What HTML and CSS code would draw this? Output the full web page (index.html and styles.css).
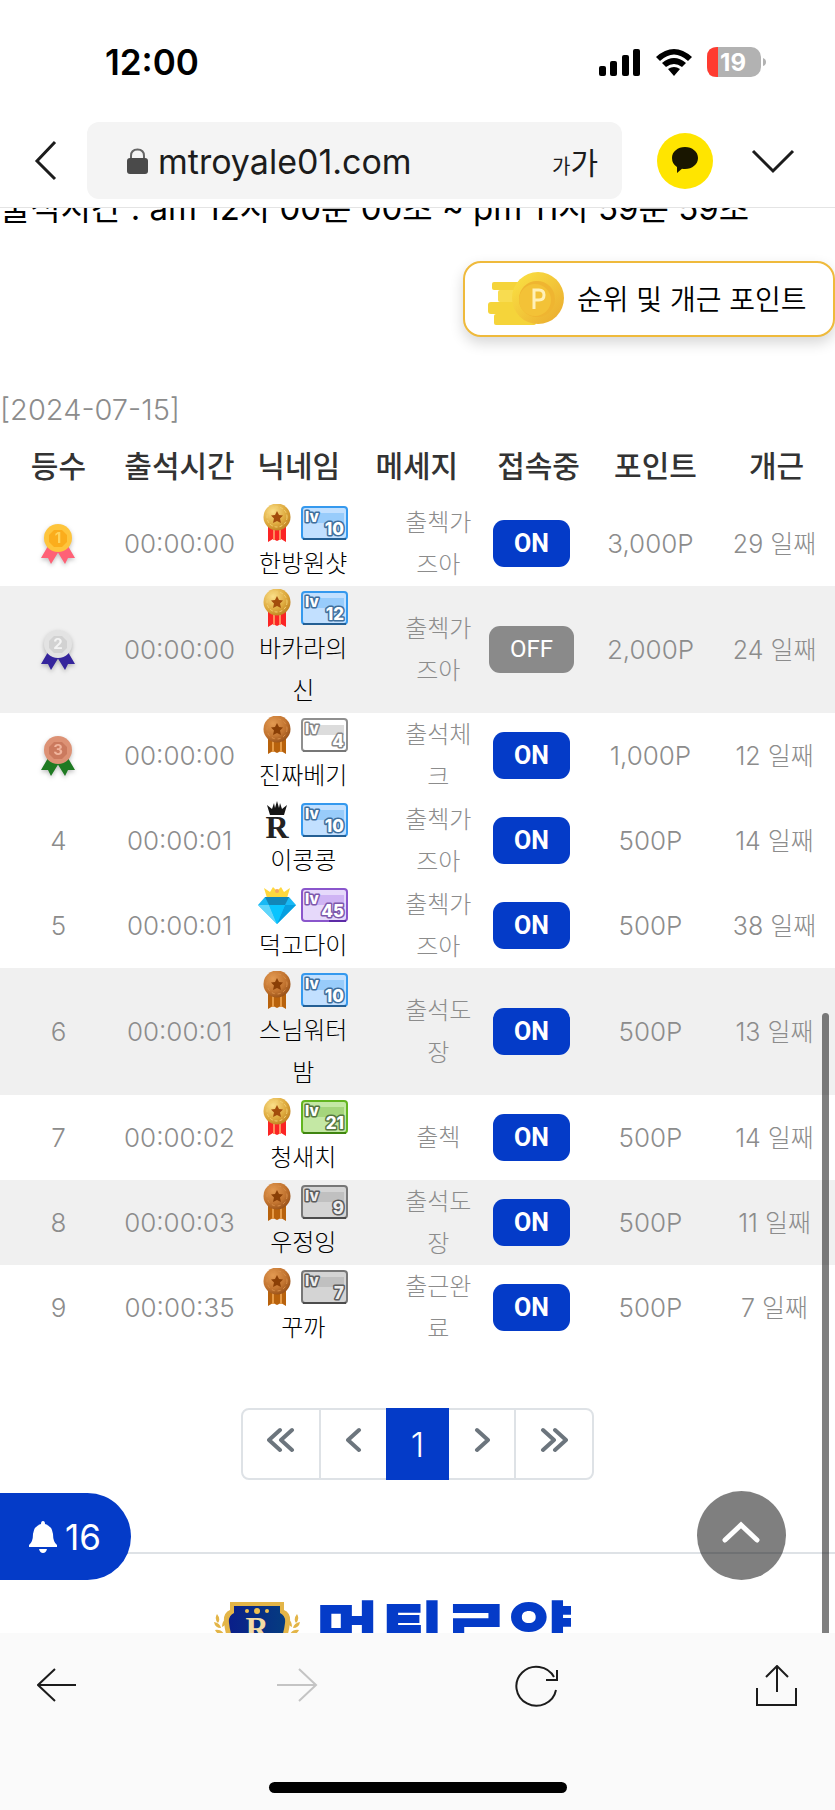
FILE: index.html
```html
<!DOCTYPE html>
<html lang="ko">
<head>
<meta charset="utf-8">
<meta name="viewport" content="width=device-width, initial-scale=1">
<title>mtroyale01.com</title>
<link rel="stylesheet" href="styles.css">
</head>
<body>
<svg class="defs" aria-hidden="true">
  <defs>
    <linearGradient id="coin" x1="0" y1="0" x2="1" y2="1"><stop offset="0" stop-color="#fbe444"/><stop offset="1" stop-color="#eaa92e"/></linearGradient>
    <radialGradient id="gold" cx=".35" cy=".3" r=".8"><stop offset="0" stop-color="#fbe08a"/><stop offset=".6" stop-color="#deaa3e"/><stop offset="1" stop-color="#b97a1c"/></radialGradient>
    <radialGradient id="bronze" cx=".35" cy=".3" r=".8"><stop offset="0" stop-color="#e39a52"/><stop offset=".6" stop-color="#c27430"/><stop offset="1" stop-color="#8f4a14"/></radialGradient>
    <linearGradient id="navy" x1="0" y1="0" x2="1" y2="0"><stop offset="0" stop-color="#0a1f8a"/><stop offset="1" stop-color="#053c80"/></linearGradient>
    <symbol id="medal-gold" viewBox="0 0 38 38">
      <path d="M10 23h18v15l-5-3-4 2-4-2-5 3z" fill="#fb2424"/><path d="M15 24h2v12h-2zm6 0h2v12h-2z" fill="#ff8a5a"/>
      <circle cx="19" cy="13" r="13.500" fill="url(#gold)"/><circle cx="19" cy="13" r="10" fill="none" stroke="#f3d171" stroke-dasharray="3 2"/>
      <path d="M19 7l2 4 4 .5-3 3 1 4.500-4-2-4 2 1-4.500-3-3 4-.5z" fill="#a34d0c"/>
    </symbol>
    <symbol id="medal-bronze" viewBox="0 0 38 38">
      <path d="M10 23h18v15l-5-3-4 2-4-2-5 3z" fill="#b8620c"/><path d="M14 24h2v12h-2zm8 0h2v12h-2z" fill="#e69a45"/>
      <circle cx="19" cy="13" r="13.500" fill="url(#bronze)"/><circle cx="19" cy="13" r="10" fill="none" stroke="#d98f4a" stroke-dasharray="3 3"/>
      <path d="M19 7l2 4 4 .5-3 3 1 4.500-4-2-4 2 1-4.500-3-3 4-.5z" fill="#8a3f06"/>
    </symbol>
    <symbol id="crown-r" viewBox="0 0 38 38">
      <path d="M12 14L9 4l5 4 2-6 1 5 2-7 2 7 1-5 2 6 5-4-3 10z" fill="#151515"/>
      <text class="crown-letter" x="19" y="37" text-anchor="middle">R</text>
    </symbol>
    <symbol id="diamond" viewBox="0 0 38 38">
      <path d="M9 12L6 2l6 4 3-5 4 4 4-4 3 5 6-4-3 10z" fill="#ffd83d"/><circle cx="19" cy="5" r="2" fill="#f7a65c"/>
      <path d="M7 11h24l7 8-19 19L0 19z" fill="#18b9f5"/><path d="M7 11h24l-4 8H11z" fill="#1286b8"/><path d="M0 19h11l8 19z" fill="#5fd6fb"/><path d="M38 19H27l-8 19z" fill="#079fe0"/><path d="M11 19h16l-8 19z" fill="#08c4ff"/>
    </symbol>
    <symbol id="rank-medal" viewBox="0 0 40 44">
      <path d="M10 24L3 36l7 0 3 6 8-13z"/><path d="M30 24l7 12-7 0-3 6-8-13z"/>
    </symbol>
  </defs>
</svg>
<div class="app">
  <header class="top">
    <div class="status">
      <time class="clock">12:00</time>
      <div class="status-icons">
        <svg width="42" height="27" viewBox="0 0 42 27"><rect x="0" y="17" width="7" height="10" rx="2"/><rect x="11" y="12" width="7" height="15" rx="2"/><rect x="23" y="6" width="7" height="21" rx="2"/><rect x="34" y="0" width="7" height="27" rx="2"/></svg>
        <svg width="36" height="27" viewBox="0 0 36 27"><path d="M0 8Q18-8 36 8L32 12Q18-1 4 12zM6 14Q18 4 30 14L26 18Q18 12 10 18zM12 20Q18 16 24 20L18 27z"/></svg>
        <svg width="59" height="30" viewBox="0 0 59 30"><rect width="54" height="30" rx="10" fill="#b2b2b2"/><path d="M11 0H10Q0 0 0 10v10q0 10 10 10h1z" fill="#ff3b30"/><path d="M56 11q3 1 3 4t-3 4z" fill="#b2b2b2"/><text class="battery" x="26" y="24" text-anchor="middle">19</text></svg>
      </div>
    </div>
    <div class="nav">
      <button class="plain back" aria-label="뒤로"><svg width="24" height="42" viewBox="0 0 24 42"><path class="line" d="M21 2L3 21l18 18"/></svg></button>
      <div class="address">
        <svg width="21" height="26" viewBox="0 0 21 26"><path d="M4 12V8q0-6.500 6.500-6.500T17 8v4" fill="none" stroke="#666" stroke-width="2"/><rect y="10" width="21" height="16" rx="3" fill="#4a4a4a"/></svg>
        <input class="url" type="text" aria-label="주소" value="mtroyale01.com">
        <button class="plain size" aria-label="글자 크기"><span class="size-small">가</span><span class="size-big">가</span></button>
      </div>
      <button class="talk" aria-label="톡"><svg width="26" height="27" viewBox="0 0 26 27"><path d="M13 0c7.200 0 13 4.700 13 11s-5.800 11-13 11q-2 0-3-.3L5 26v-6Q0 17 0 11C0 4.700 5.800 0 13 0z" fill="#191600"/></svg></button>
      <button class="plain" aria-label="접기"><svg width="44" height="26" viewBox="0 0 44 26"><path class="line" d="M2 3l20 20L42 3"/></svg></button>
    </div>
  </header>

  <main class="page">
    <p class="hours">출석시간 : am 12시 00분 00초 ~ pm 11시 59분 59초</p>
    <button class="reward">
      <svg width="77" height="54" viewBox="0 0 77 54"><g fill="#f5d43a"><rect x="4" y="10" width="34" height="8" rx="2"/><rect x="10" y="18" width="28" height="12" rx="2" fill="#f8dc50"/><rect x="0" y="30" width="34" height="12" rx="3"/><rect x="6" y="42" width="42" height="11" rx="2"/></g><circle cx="50" cy="26" r="26" fill="url(#coin)"/><circle cx="49" cy="27" r="18" fill="#efb531"/><circle cx="47" cy="28" r="16" fill="#f3c237"/><path d="M46 37V18h5q5 0 5 5t-5 5h-5" fill="none" stroke="#fff1b8" stroke-width="3"/></svg>
      <span>순위 및 개근 포인트</span>
    </button>

    <p class="date">[2024-07-15]</p>
    <table class="ranks">
      <colgroup><col class="c-rank"><col class="c-time"><col class="c-nick"><col class="c-msg"><col class="c-state"><col class="c-point"><col class="c-days"></colgroup>
      <thead>
        <tr><th>등수</th><th>출석시간</th><th class="h-nick">닉네임</th><th class="h-msg">메세지</th><th>접속중</th><th>포인트</th><th>개근</th></tr>
      </thead>
      <tbody>
        <tr><td><svg class="rank first" viewBox="0 0 40 44"><use href="#rank-medal"/><circle cx="20" cy="16" r="14"/><path class="coin-edge" d="M16 8h8l5 5v7l-5 5h-8l-5-5v-7z"/><text x="20" y="21">1</text></svg></td><td>00:00:00</td>
          <td class="nick"><span class="icons"><svg class="emblem"><use href="#medal-gold"/></svg><svg class="level blue" viewBox="0 0 47 34"><rect class="face" x="1" y="1" width="45" height="32" rx="3"/><path class="shine" d="M5 7h38v10H5z"/><path class="base" d="M2 33h43"/><text x="4" y="16">lv</text><text class="num" x="43" y="29">10</text></svg></span>한방원샷</td>
          <td class="msg">출첵가즈아</td><td class="state"><span class="tag on">ON</span></td><td class="point">3,000P</td><td class="days">29 일째</td></tr>
        <tr class="shade tall"><td><svg class="rank second" viewBox="0 0 40 44"><use href="#rank-medal"/><circle cx="20" cy="16" r="14"/><path class="coin-edge" d="M16 8h8l5 5v7l-5 5h-8l-5-5v-7z"/><text x="20" y="21">2</text></svg></td><td>00:00:00</td>
          <td class="nick"><span class="icons"><svg class="emblem"><use href="#medal-gold"/></svg><svg class="level blue" viewBox="0 0 47 34"><rect class="face" x="1" y="1" width="45" height="32" rx="3"/><path class="shine" d="M5 7h38v10H5z"/><path class="base" d="M2 33h43"/><text x="4" y="16">lv</text><text class="num" x="43" y="29">12</text></svg></span>바카라의신</td>
          <td class="msg">출첵가즈아</td><td class="state"><span class="tag off">OFF</span></td><td class="point">2,000P</td><td class="days">24 일째</td></tr>
        <tr><td><svg class="rank third" viewBox="0 0 40 44"><use href="#rank-medal"/><circle cx="20" cy="16" r="14"/><path class="coin-edge" d="M16 8h8l5 5v7l-5 5h-8l-5-5v-7z"/><text x="20" y="21">3</text></svg></td><td>00:00:00</td>
          <td class="nick"><span class="icons"><svg class="emblem"><use href="#medal-bronze"/></svg><svg class="level white" viewBox="0 0 47 34"><rect class="face" x="1" y="1" width="45" height="32" rx="3"/><path class="shine" d="M5 7h38v10H5z"/><path class="base" d="M2 33h43"/><text x="4" y="16">lv</text><text class="num" x="43" y="29">4</text></svg></span>진짜베기</td>
          <td class="msg">출석체크</td><td class="state"><span class="tag on">ON</span></td><td class="point">1,000P</td><td class="days">12 일째</td></tr>
        <tr><td>4</td><td>00:00:01</td>
          <td class="nick"><span class="icons"><svg class="emblem"><use href="#crown-r"/></svg><svg class="level blue" viewBox="0 0 47 34"><rect class="face" x="1" y="1" width="45" height="32" rx="3"/><path class="shine" d="M5 7h38v10H5z"/><path class="base" d="M2 33h43"/><text x="4" y="16">lv</text><text class="num" x="43" y="29">10</text></svg></span>이콩콩</td>
          <td class="msg">출첵가즈아</td><td class="state"><span class="tag on">ON</span></td><td class="point">500P</td><td class="days">14 일째</td></tr>
        <tr><td>5</td><td>00:00:01</td>
          <td class="nick"><span class="icons"><svg class="emblem"><use href="#diamond"/></svg><svg class="level purple" viewBox="0 0 47 34"><rect class="face" x="1" y="1" width="45" height="32" rx="3"/><path class="shine" d="M5 7h38v10H5z"/><path class="base" d="M28 33h17"/><text x="4" y="16">lv</text><text class="num" x="43" y="29">45</text></svg></span>덕고다이</td>
          <td class="msg">출첵가즈아</td><td class="state"><span class="tag on">ON</span></td><td class="point">500P</td><td class="days">38 일째</td></tr>
        <tr class="shade tall"><td>6</td><td>00:00:01</td>
          <td class="nick"><span class="icons"><svg class="emblem"><use href="#medal-bronze"/></svg><svg class="level blue" viewBox="0 0 47 34"><rect class="face" x="1" y="1" width="45" height="32" rx="3"/><path class="shine" d="M5 7h38v10H5z"/><path class="base" d="M2 33h43"/><text x="4" y="16">lv</text><text class="num" x="43" y="29">10</text></svg></span>스님워터밤</td>
          <td class="msg">출석도장</td><td class="state"><span class="tag on">ON</span></td><td class="point">500P</td><td class="days">13 일째</td></tr>
        <tr><td>7</td><td>00:00:02</td>
          <td class="nick"><span class="icons"><svg class="emblem"><use href="#medal-gold"/></svg><svg class="level green" viewBox="0 0 47 34"><rect class="face" x="1" y="1" width="45" height="32" rx="3"/><path class="shine" d="M5 7h38v10H5z"/><path class="base" d="M2 33h43"/><text x="4" y="16">lv</text><text class="num" x="43" y="29">21</text></svg></span>청새치</td>
          <td class="msg">출첵</td><td class="state"><span class="tag on">ON</span></td><td class="point">500P</td><td class="days">14 일째</td></tr>
        <tr class="shade"><td>8</td><td>00:00:03</td>
          <td class="nick"><span class="icons"><svg class="emblem"><use href="#medal-bronze"/></svg><svg class="level gray" viewBox="0 0 47 34"><rect class="face" x="1" y="1" width="45" height="32" rx="3"/><path class="shine" d="M5 7h38v10H5z"/><path class="base" d="M2 33h43"/><text x="4" y="16">lv</text><text class="num" x="43" y="29">9</text></svg></span>우정잉</td>
          <td class="msg">출석도장</td><td class="state"><span class="tag on">ON</span></td><td class="point">500P</td><td class="days">11 일째</td></tr>
        <tr><td>9</td><td>00:00:35</td>
          <td class="nick"><span class="icons"><svg class="emblem"><use href="#medal-bronze"/></svg><svg class="level gray" viewBox="0 0 47 34"><rect class="face" x="1" y="1" width="45" height="32" rx="3"/><path class="shine" d="M5 7h38v10H5z"/><path class="base" d="M2 33h43"/><text x="4" y="16">lv</text><text class="num" x="43" y="29">7</text></svg></span>꾸까</td>
          <td class="msg">출근완료</td><td class="state"><span class="tag on">ON</span></td><td class="point">500P</td><td class="days">7 일째</td></tr>
      </tbody>
    </table>

    <nav class="pager" aria-label="페이지">
      <a href="#" class="wide" aria-label="처음"><svg width="28" height="26" viewBox="0 0 28 26"><path d="M13 3L2 13l11 10M25 3L14 13l11 10"/></svg></a>
      <a href="#" aria-label="이전"><svg width="16" height="26" viewBox="0 0 16 26"><path d="M13 3L2 13l11 10"/></svg></a>
      <a href="#" class="current" aria-current="page">1</a>
      <a href="#" aria-label="다음"><svg width="16" height="26" viewBox="0 0 16 26"><path d="M3 3l11 10L3 23"/></svg></a>
      <a href="#" class="wide" aria-label="마지막"><svg width="28" height="26" viewBox="0 0 28 26"><path d="M3 3l11 10L3 23M15 3l11 10-11 10"/></svg></a>
    </nav>

    <section class="brand">
      <svg width="86" height="72" viewBox="0 0 86 72"><g fill="#e3b548"><path d="M3 13q4 5 1 9-4-4-1-9zM0 21q6 1 7 6-6 0-7-6zM1 29q6-1 9 4-6 2-9-4zM12 18q1 6-4 8 0-6 4-8zM83 13q-4 5-1 9 4-4 1-9zM86 21q-6 1-7 6 6 0 7-6zM85 29q-6-1-9 4 6 2 9-4zM74 18q-1 6 4 8 0-6-4-8z"/><path d="M16 1h54v8q7 3 6 12-3 34-33 48Q13 55 10 21q-1-9 6-12z"/></g><path d="M20 5h46v7q6 3 5 10-3 28-28 42Q18 50 15 22q-1-7 5-10z" fill="url(#navy)"/><g fill="#f0c050"><circle cx="33" cy="10" r="2"/><circle cx="43" cy="10" r="3"/><circle cx="53" cy="10" r="2"/></g><text class="crest" x="43" y="38" text-anchor="middle">R</text></svg>
      <strong class="brand-name">먹튀로얄</strong>
    </section>

    <button class="alerts" aria-label="알림 16"><svg width="28" height="32" viewBox="0 0 28 32"><path d="M14 0q2 0 2 3 7 2 8 10 0 8 4 11v2H0v-2q4-3 4-11 1-8 8-10 0-3 2-3zM10 28h8q-1 4-4 4t-4-4z" fill="#fff"/></svg><span>16</span></button>
    <button class="to-top" aria-label="맨 위로"><svg width="38" height="24" viewBox="0 0 38 24"><path d="M3 20L19 5l16 15" fill="none" stroke="#fff" stroke-width="5" stroke-linecap="round"/></svg></button>
    <div class="scrollbar"></div>
  </main>

  <footer class="bottom">
    <nav class="tools">
      <button class="plain" aria-label="이전 페이지"><svg width="42" height="42" viewBox="0 0 42 42"><path class="thin" d="M18 4L1 20l17 16M1 20h38"/></svg></button>
      <button class="plain" aria-label="다음 페이지" disabled><svg width="42" height="42" viewBox="0 0 42 42"><path class="thin faded" d="M23 4l17 16-17 16M40 20H1"/></svg></button>
      <button class="plain" aria-label="새로고침"><svg width="44" height="42" viewBox="0 0 44 42"><path class="thin" d="M41 25A20 19.500 0 1 1 39 12M31 15h11V5"/></svg></button>
      <button class="plain" aria-label="공유"><svg width="42" height="42" viewBox="0 0 42 42"><path class="thin" d="M1 23v17h39V23M21 27V1M10 12L21 1l11 11"/></svg></button>
    </nav>
    <div class="home"></div>
  </footer>
</div>
</body>
</html>
```

FILE: styles.css
```css
* { box-sizing: border-box; }
body { margin: 0; font-family: Inter, "Noto Sans CJK KR", sans-serif; color: #000; background: #fff; }
p { margin: 0; }
svg { display: block; flex: none; }
button { font: inherit; color: inherit; cursor: pointer; }
a { text-decoration: none; }
.defs { position: absolute; width: 0; height: 0; }
.app { display: flex; flex-direction: column; height: 100vh; overflow: hidden; }
.plain { border: 0; background: none; padding: 0; }
.line { fill: none; stroke: #1c1c1c; stroke-width: 3; }
.thin { fill: none; stroke: #1c1c1c; stroke-width: 2; }
.faded { stroke: #c4c4c4; }

.top { flex: none; border-bottom: 1px solid #e4e4e4; background: #fff; }
.status { display: flex; justify-content: space-between; align-items: center; height: 122px; padding: 2px 69px 0 105px; }
.clock { font-size: 35px; font-weight: 600; }
.status-icons { display: flex; align-items: center; gap: 15px; }
.battery { font: 700 24px Inter, sans-serif; fill: #fff; }
.nav { display: flex; align-items: center; height: 85px; padding: 0 40px 8px 34px; }
.back { width: 53px; }
.address { flex: 1; min-width: 0; display: flex; align-items: center; gap: 10px; height: 77px; padding: 0 24px 0 40px; border-radius: 12px; background: #f4f4f4; }
.url { flex: 1; min-width: 0; border: 0; padding: 2px 0 0; background: none; font: 400 34px Inter, sans-serif; color: #1c1c1c; }
.size { display: flex; align-items: baseline; color: #1c1c1c; font-weight: 400; }
.size-small { font-size: 20px; }
.size-big { font-size: 30px; }
.talk { display: grid; place-items: center; width: 56px; height: 56px; margin: 0 38px 0 35px; border: 0; border-radius: 50%; background: #ffe500; padding: 0; }

.page { position: relative; flex: 1; min-height: 0; overflow: hidden; }
.hours { height: 53px; margin-top: -20px; font-size: 33px; line-height: 40px; font-weight: 400; white-space: nowrap; }
.reward { display: flex; align-items: center; gap: 12px; width: 372px; height: 76px; margin: 20px 0 0 auto; padding: 0 0 0 23px; border: 2px solid #efba3c; border-radius: 18px; background: #fff; box-shadow: 0 6px 14px rgba(0,0,0,.16); font-family: "Noto Sans CJK KR", sans-serif; font-size: 28px; line-height: 40px; font-weight: 350; white-space: nowrap; }
.reward span { padding-bottom: 2px; }
.date { margin-top: 52px; font-size: 29px; line-height: 42px; font-weight: 300; color: #8c8c8c; }

.ranks { width: 100%; table-layout: fixed; border-collapse: collapse; color: #8c8c8c; font-size: 26px; font-weight: 300; line-height: 42px; text-align: center; }
.c-rank { width: 14%; } .c-time { width: 15%; } .c-nick { width: 15%; } .c-msg { width: 14%; } .c-state { width: 13%; } .c-point { width: 15%; } .c-days { width: 14%; }
.ranks th { height: 70px; padding: 0; font-size: 30px; font-weight: 500; color: #333; white-space: nowrap; }
.ranks td { height: 85px; padding: 0; }
.ranks .tall td { height: 127px; }
.shade { background: #f0f0f0; }
.ranks .h-nick { padding-right: 12px; }
.ranks .h-msg { padding-right: 18px; }
.ranks .msg { padding: 0 8px 0 33px; font-size: 24px; }
.ranks .nick { padding: 0 17px 0 14px; color: #000; font-size: 24px; }
.ranks .state { padding-right: 14px; }
.ranks .point { padding-right: 10px; }
.ranks .days { padding-right: 4px; font-size: 25px; }
.icons { display: flex; justify-content: center; align-items: center; gap: 5px; height: 41px; }
.emblem { width: 38px; height: 38px; }
.crown-letter { font: 700 32px "Liberation Serif", serif; fill: #222; }
.tag { display: inline-block; vertical-align: middle; padding: 0 21px; border-radius: 11px; color: #fff; font: 400 24px/47px Roboto, sans-serif; }
.on { background: #043bc8; font-weight: 700; font-size: 25px; }
.off { background: #8a8a8a; }

.rank { width: 40px; height: 44px; margin: 0 auto; filter: drop-shadow(0 2px 2px rgba(0,0,0,.25)); }
.rank text { font: 700 15px Inter, sans-serif; text-anchor: middle; }
.coin-edge { stroke-width: 1; }
.first { fill: #ff6176; } .first circle { fill: #fec53c; } .first .coin-edge { fill: #fbad1c; } .first text { fill: #ffd45c; }
.second { fill: #35259c; } .second circle { fill: #e3e3e3; } .second .coin-edge { fill: #d2d2d2; } .second text { fill: #f4f4f4; }
.third { fill: #1f7a22; } .third circle { fill: #dd9275; } .third .coin-edge { fill: #cb7a5e; } .third text { fill: #f0b49c; }

.level { width: 47px; height: 34px; }
.level .face { stroke-width: 2; }
.level .base { fill: none; stroke-width: 2; }
.level text { font: 800 15px Inter, sans-serif; fill: #fff; stroke-width: 3; paint-order: stroke; stroke-linejoin: round; }
.level .num { font-size: 17px; text-anchor: end; }
.blue .face { fill: #c2e0ff; stroke: #3599ee; } .blue .shine { fill: #98ccfb; } .blue .base { stroke: #245f94; } .blue text { stroke: #3f6f9c; }
.white .face { fill: #fff; stroke: #8f8f8f; } .white .shine { fill: #dcdcdc; } .white .base { stroke: #777; } .white text { stroke: #868686; }
.gray .face { fill: #d4d4d4; stroke: #777; } .gray .shine { fill: #c0c0c0; } .gray .base { stroke: #4c4c4c; } .gray text { stroke: #5c5c5c; fill: #eee; }
.green .face { fill: #c4e8a4; stroke: #63b520; } .green .shine { fill: #a5d57c; } .green .base { stroke: #3f8410; } .green text { stroke: #55763f; }
.purple .face { fill: #e6d9fb; stroke: #8a56cc; } .purple .shine { fill: #cfb4f4; } .purple .base { stroke: #5c2aa6; } .purple text { stroke: #7d58ac; }

.pager { display: flex; width: max-content; height: 72px; margin: 58px auto 0; border: 2px solid #dee2e6; border-radius: 8px; }
.pager a { display: grid; place-items: center; width: 65px; padding-bottom: 8px; color: #fff; font-size: 34px; font-weight: 300; }
.pager .wide { width: 78px; }
.pager .wide:first-child { border-right: 2px solid #dee2e6; }
.pager .wide:last-child { border-left: 2px solid #dee2e6; }
.pager .current { width: 63px; margin: -2px 0; padding: 0; background: #043bc8; }
.pager path { fill: none; stroke: #6c757d; stroke-width: 4; stroke-linecap: round; stroke-linejoin: round; }

.brand { display: flex; align-items: flex-start; justify-content: center; gap: 15px; margin-top: 72px; padding: 47px 48px 0 0; border-top: 2px solid #dee2e6; }
.crest { font: 700 32px "Liberation Serif", serif; fill: #f3dca4; }
.brand-name { font: 900 70px/58px "Noto Sans CJK KR", sans-serif; color: #043bc8; }
.alerts { position: absolute; left: 0; bottom: 53px; display: flex; align-items: center; gap: 8px; height: 87px; padding: 0 30px 0 29px; border: 0; border-radius: 0 44px 44px 0; background: #043bc8; color: #fff; font-size: 35px; }
.to-top { position: absolute; right: 49px; bottom: 53px; display: grid; place-items: center; width: 89px; height: 89px; padding: 0 2px 8px 0; border: 0; border-radius: 50%; background: rgba(0,0,0,.5); }
.scrollbar { position: absolute; right: 6px; bottom: 0; width: 7px; height: 620px; border-radius: 4px 4px 0 0; background: rgba(0,0,0,.5); }

.bottom { flex: none; height: 177px; display: flex; flex-direction: column; justify-content: space-between; align-items: center; padding: 32px 37px 17px; background: #fafafa; }
.tools { display: flex; justify-content: space-between; width: 100%; }
.home { width: 298px; height: 11px; border-radius: 6px; background: #000; }
```
